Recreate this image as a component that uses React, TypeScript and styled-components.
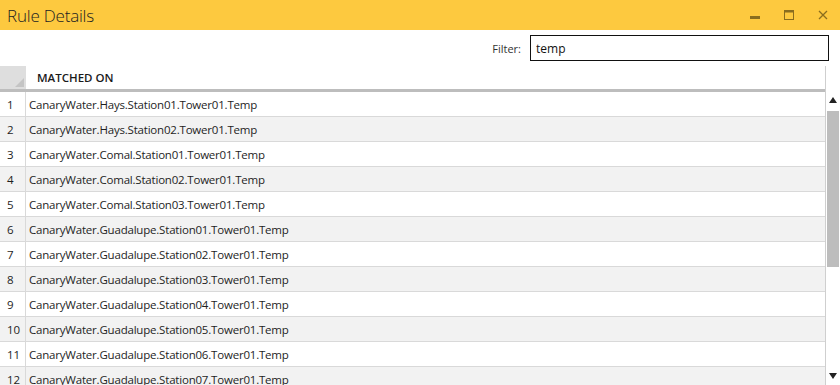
import styled, { createGlobalStyle } from "styled-components";

const rows = [
  "CanaryWater.Hays.Station01.Tower01.Temp",
  "CanaryWater.Hays.Station02.Tower01.Temp",
  "CanaryWater.Comal.Station01.Tower01.Temp",
  "CanaryWater.Comal.Station02.Tower01.Temp",
  "CanaryWater.Comal.Station03.Tower01.Temp",
  "CanaryWater.Guadalupe.Station01.Tower01.Temp",
  "CanaryWater.Guadalupe.Station02.Tower01.Temp",
  "CanaryWater.Guadalupe.Station03.Tower01.Temp",
  "CanaryWater.Guadalupe.Station04.Tower01.Temp",
  "CanaryWater.Guadalupe.Station05.Tower01.Temp",
  "CanaryWater.Guadalupe.Station06.Tower01.Temp",
  "CanaryWater.Guadalupe.Station07.Tower01.Temp",
];

const GlobalStyle = createGlobalStyle`
  html, body {
    margin: 0;
    padding: 0;
    background: #ffffff;
    overflow: hidden;
  }
  body {
    font-family: "Open Sans", "Noto Sans", sans-serif;
    color: #1e1e1e;
  }
`;

export default function App() {
  return (
    <>
      <GlobalStyle />
      <Window>
        <TitleBar>
          <Title>Rule Details</Title>
          <Controls>
            <ControlButton>
              <svg width="10" height="10" viewBox="0 0 10 10">
                <rect x="0" y="6" width="10" height="3" fill="#8a6d1e" />
              </svg>
            </ControlButton>
            <ControlButton>
              <svg width="10" height="10" viewBox="0 0 10 10">
                <rect x="0.5" y="0.5" width="9" height="9" fill="none" stroke="#8a6d1e" />
                <rect x="0" y="0" width="10" height="2.5" fill="#8a6d1e" />
              </svg>
            </ControlButton>
            <ControlButton>
              <svg width="10" height="10" viewBox="0 0 10 10">
                <path d="M1 1 L9 9 M9 1 L1 9" stroke="#8a6d1e" strokeWidth="1.3" />
              </svg>
            </ControlButton>
          </Controls>
        </TitleBar>

        <FilterRow>
          <FilterLabel>Filter:</FilterLabel>
          <FilterInput defaultValue="temp" />
        </FilterRow>

        <Grid>
          <GridBody>
            <HeaderRow>
              <Corner>
                <CornerMark />
              </Corner>
              <HeaderCell>MATCHED ON</HeaderCell>
            </HeaderRow>
            {rows.map((r, i) => (
              <Row key={r} $alt={i % 2 === 1}>
                <RowNum>{i + 1}</RowNum>
                <Cell>{r}</Cell>
              </Row>
            ))}
          </GridBody>
          <ScrollBar>
            <ArrowUp />
            <Track>
              <Thumb />
            </Track>
            <ArrowDown />
          </ScrollBar>
        </Grid>
      </Window>
    </>
  );
}

const Window = styled.div`
  width: 840px;
  height: 385px;
  display: flex;
  flex-direction: column;
  overflow: hidden;
`;

const TitleBar = styled.div`
  height: 30px;
  flex-shrink: 0;
  background: #fdc93f;
  display: flex;
  align-items: center;
  justify-content: space-between;
`;

const Title = styled.div`
  padding-left: 7px;
  font-size: 17px;
  font-weight: 300;
  color: #222;
  letter-spacing: -0.2px;
`;

const Controls = styled.div`
  display: flex;
  align-items: center;
`;

const ControlButton = styled.div`
  width: 34px;
  height: 30px;
  display: flex;
  align-items: center;
  justify-content: center;
`;

const FilterRow = styled.div`
  height: 36px;
  flex-shrink: 0;
  display: flex;
  align-items: center;
  justify-content: flex-end;
  padding-right: 11px;
  gap: 9px;
`;

const FilterLabel = styled.span`
  font-size: 11px;
  color: #333;
`;

const FilterInput = styled.input`
  width: 299px;
  height: 26px;
  border: 1.5px solid #111;
  padding: 0 5px;
  font-family: inherit;
  font-size: 12px;
  color: #111;
  outline: none;
  box-sizing: border-box;
`;

const Grid = styled.div`
  flex: 1;
  display: flex;
  min-height: 0;
`;

const GridBody = styled.div`
  width: 826px;
  border-right: 1px solid #cfcfcf;
  box-sizing: border-box;
  overflow: hidden;
`;

const HeaderRow = styled.div`
  display: flex;
  height: 23px;
  border-bottom: 3px solid #bdbdbd;
`;

const Corner = styled.div`
  width: 26px;
  background: #dedede;
  position: relative;
  flex-shrink: 0;
`;

const CornerMark = styled.div`
  position: absolute;
  right: 2px;
  bottom: 2px;
  width: 0;
  height: 0;
  border-left: 9px solid transparent;
  border-bottom: 9px solid #c4c4c4;
`;

const HeaderCell = styled.div`
  flex: 1;
  display: flex;
  align-items: center;
  padding-left: 11px;
  font-size: 11.5px;
  font-weight: 600;
  color: #1a1a1a;
`;

const Row = styled.div<{ $alt: boolean }>`
  display: flex;
  height: 24px;
  border-bottom: 1px solid #d9d9d9;
  background: ${(p) => (p.$alt ? "#f2f2f2" : "#ffffff")};
`;

const RowNum = styled.div`
  width: 26px;
  flex-shrink: 0;
  box-sizing: border-box;
  padding-left: 7px;
  display: flex;
  align-items: center;
  font-size: 11.5px;
  border-right: 1px solid #d9d9d9;
  background: inherit;
`;

const Cell = styled.div`
  flex: 1;
  display: flex;
  align-items: center;
  padding-left: 3px;
  font-size: 11.5px;
  letter-spacing: -0.2px;
  color: #1e1e1e;
`;

const ScrollBar = styled.div`
  flex: 1;
  display: flex;
  flex-direction: column;
  align-items: center;
  padding-top: 31px;
`;

const ArrowUp = styled.div`
  width: 0;
  height: 0;
  border-left: 4.5px solid transparent;
  border-right: 4.5px solid transparent;
  border-bottom: 6px solid #222;
  margin-bottom: 8px;
`;

const ArrowDown = styled.div`
  width: 0;
  height: 0;
  border-left: 4.5px solid transparent;
  border-right: 4.5px solid transparent;
  border-top: 6px solid #222;
  margin-bottom: 6px;
`;

const Track = styled.div`
  flex: 1;
  width: 12px;
  margin-bottom: 6px;
`;

const Thumb = styled.div`
  width: 12px;
  height: 156px;
  background: #bdbdbd;
`;
